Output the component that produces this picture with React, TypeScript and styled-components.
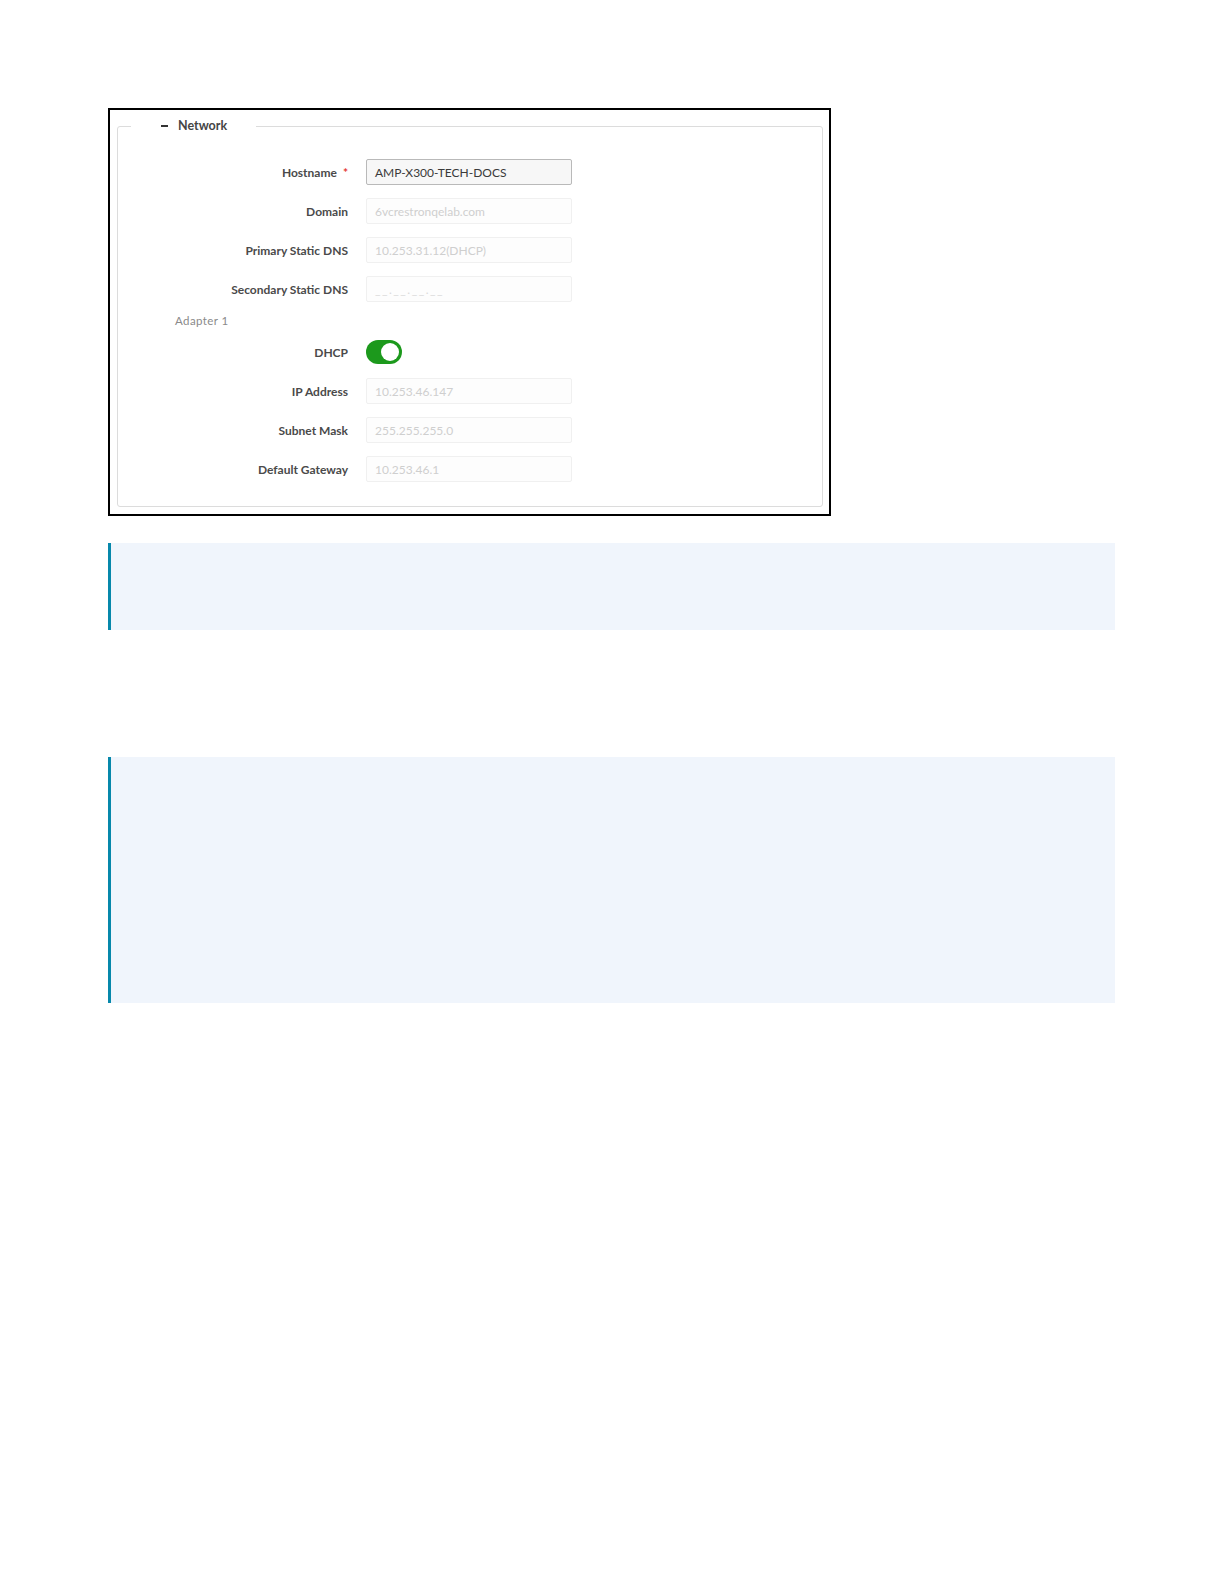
import React from 'react';
import styled, { createGlobalStyle } from 'styled-components';

const GlobalStyle = createGlobalStyle`
  html, body {
    margin: 0;
    padding: 0;
    background: #ffffff;
  }
  body {
    font-family: Lato, "Open Sans", "Liberation Sans", sans-serif;
  }
`;

const Page = styled.div`
  width: 1224px;
  min-height: 1584px;
  box-sizing: border-box;
  padding: 108px 109px 0 108px;
`;

const Frame = styled.div`
  width: 723px;
  box-sizing: border-box;
  border: 2px solid #000;
  padding: 8px 6px 7px 7px;
`;

const Fieldset = styled.fieldset`
  margin: 0;
  padding: 25px 0 24px 0;
  border: 1px solid #dcdcdc;
  border-radius: 3px;
  min-width: 0;
`;

const Legend = styled.legend`
  display: flex;
  align-items: center;
  margin-left: 13px;
  padding: 0 29px 0 30px;
  height: 16px;
  line-height: 16px;
  font-size: 12.5px;
  font-weight: 700;
  color: #454545;
`;

const Collapse = styled.span`
  display: inline-block;
  width: 7px;
  height: 2px;
  background: #333;
  margin-right: 10px;
`;

const Rows = styled.div`
  display: flex;
  flex-direction: column;
  gap: 13px;
`;

const Row = styled.div`
  display: grid;
  grid-template-columns: 230px 206px;
  column-gap: 18px;
  align-items: center;
  height: 26px;
`;

const Label = styled.label`
  text-align: right;
  font-size: 12px;
  font-weight: 700;
  color: #4a4a4a;
  white-space: nowrap;
`;

const Required = styled.span`
  color: #e53935;
  margin-left: 6px;
`;

const Input = styled.div<{ $active?: boolean }>`
  box-sizing: border-box;
  height: 26px;
  padding: 0 8px;
  display: flex;
  align-items: center;
  font-size: 12px;
  white-space: nowrap;
  overflow: hidden;
  border-radius: 2px;
  border: 1px solid ${p => (p.$active ? '#b9b9b9' : '#f0f0f0')};
  background: ${p => (p.$active ? '#f7f7f7' : '#fdfdfd')};
  color: ${p => (p.$active ? '#3a3a3a' : '#cfcfcf')};
`;

const Blank = styled.span`
  letter-spacing: 1.5px;
  color: #dadada;
`;

const SubHeading = styled.div`
  height: 11px;
  line-height: 11px;
  padding-left: 57px;
  font-size: 11.5px;
  letter-spacing: 0.4px;
  color: #8a8a8a;
`;

const Toggle = styled.div<{ $on: boolean }>`
  width: 36px;
  height: 24px;
  border-radius: 12px;
  box-sizing: border-box;
  padding: 3px;
  display: flex;
  justify-content: ${p => (p.$on ? 'flex-end' : 'flex-start')};
  background: ${p => (p.$on ? '#1c991c' : '#cccccc')};
`;

const Knob = styled.span`
  width: 18px;
  height: 18px;
  border-radius: 50%;
  background: #ffffff;
`;

const Note = styled.div<{ $height: number; $gap: number }>`
  margin-top: ${p => p.$gap}px;
  width: 1007px;
  height: ${p => p.$height}px;
  box-sizing: border-box;
  border-left: 3px solid #0788ab;
  background: #f0f5fc;
`;

const fields = [
  { label: 'Domain', value: '6vcrestronqelab.com' },
  { label: 'Primary Static DNS', value: '10.253.31.12(DHCP)' },
];

const adapterFields = [
  { label: 'IP Address', value: '10.253.46.147' },
  { label: 'Subnet Mask', value: '255.255.255.0' },
  { label: 'Default Gateway', value: '10.253.46.1' },
];

const App = () => (
  <>
    <GlobalStyle />
    <Page>
      <Frame>
        <Fieldset>
          <Legend>
            <Collapse />
            Network
          </Legend>
          <Rows>
            <Row>
              <Label>
                Hostname<Required>*</Required>
              </Label>
              <Input $active>AMP-X300-TECH-DOCS</Input>
            </Row>
            {fields.map(f => (
              <Row key={f.label}>
                <Label>{f.label}</Label>
                <Input>{f.value}</Input>
              </Row>
            ))}
            <Row>
              <Label>Secondary Static DNS</Label>
              <Input>
                <Blank>__.__.__.__</Blank>
              </Input>
            </Row>
            <SubHeading>Adapter 1</SubHeading>
            <Row>
              <Label>DHCP</Label>
              <Toggle $on>
                <Knob />
              </Toggle>
            </Row>
            {adapterFields.map(f => (
              <Row key={f.label}>
                <Label>{f.label}</Label>
                <Input>{f.value}</Input>
              </Row>
            ))}
          </Rows>
        </Fieldset>
      </Frame>
      <Note $gap={27} $height={87} />
      <Note $gap={127} $height={246} />
    </Page>
  </>
);

export default App;
